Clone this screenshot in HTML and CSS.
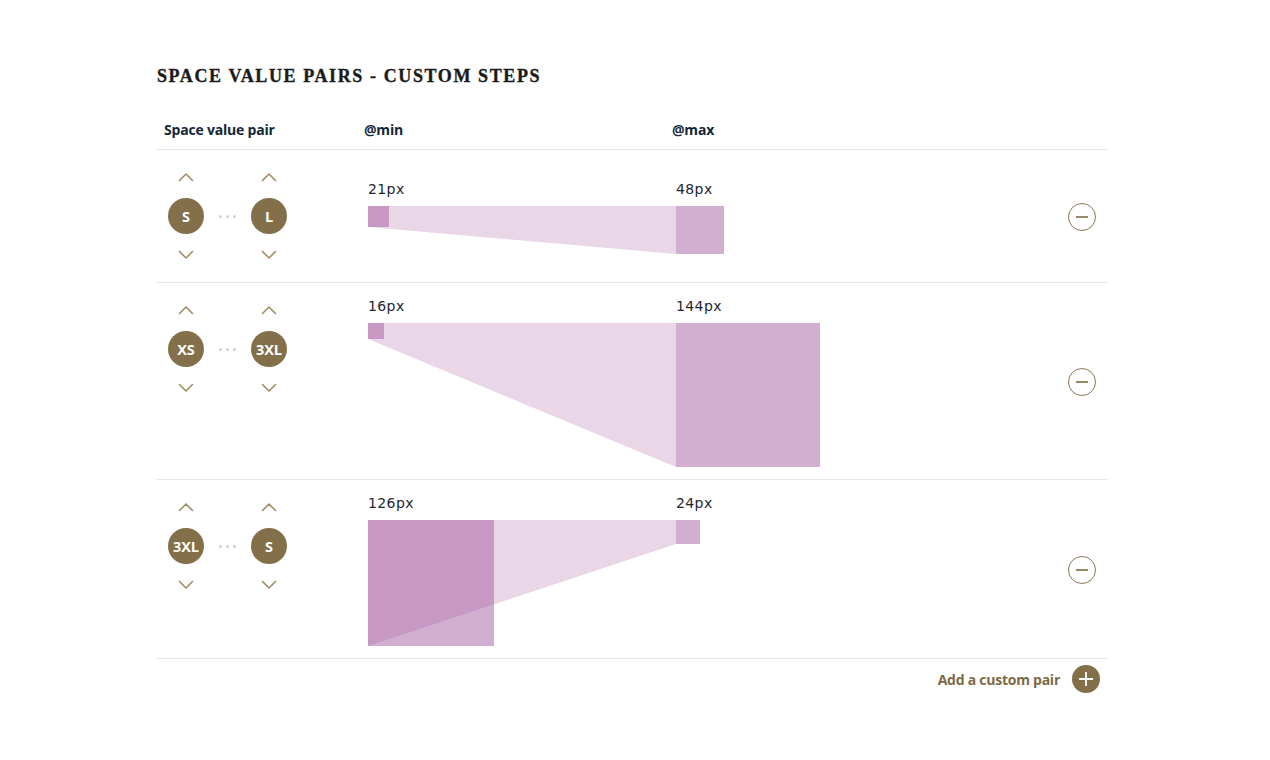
FILE: index.html
```html
<!DOCTYPE html>
<html>
<head>
<meta charset="utf-8">
<link rel="stylesheet" href="styles.css">
</head>
<body>
<div class="page">
  <h2 class="title">Space value pairs - custom steps</h2>
  <div class="table">
    <div class="head">
      <div class="h-pair">Space value pair</div>
      <div class="h-min">@min</div>
      <div class="h-max">@max</div>
    </div>

    <div class="row">
      <div class="pair">
        <div class="step">
          <button class="chev"><svg viewBox="0 0 16 10" width="16" height="10"><path d="M1.5 8.5 L8 2 L14.5 8.5"/></svg></button>
          <span class="badge">S</span>
          <button class="chev"><svg viewBox="0 0 16 10" width="16" height="10"><path d="M1.5 1.5 L8 8 L14.5 1.5"/></svg></button>
        </div>
        <span class="dots"><i></i><i></i><i></i></span>
        <div class="step">
          <button class="chev"><svg viewBox="0 0 16 10" width="16" height="10"><path d="M1.5 8.5 L8 2 L14.5 8.5"/></svg></button>
          <span class="badge">L</span>
          <button class="chev"><svg viewBox="0 0 16 10" width="16" height="10"><path d="M1.5 1.5 L8 8 L14.5 1.5"/></svg></button>
        </div>
      </div>
      <div class="viz">
        <div class="labels"><span class="lmin">21px</span><span>48px</span></div>
        <svg class="shape" width="356" height="48" viewBox="0 0 356 48">
          <polygon class="band" points="0,0 308,0 308,48 0,21"/>
          <rect class="sq" x="0" y="0" width="21" height="21"/>
          <rect class="sq" x="308" y="0" width="48" height="48"/>
        </svg>
      </div>
      <button class="remove"><svg viewBox="0 0 28 28" width="28" height="28"><circle cx="14" cy="14" r="13.5"/><path d="M8 14 H20"/></svg></button>
    </div>

    <div class="row">
      <div class="pair">
        <div class="step">
          <button class="chev"><svg viewBox="0 0 16 10" width="16" height="10"><path d="M1.5 8.5 L8 2 L14.5 8.5"/></svg></button>
          <span class="badge">XS</span>
          <button class="chev"><svg viewBox="0 0 16 10" width="16" height="10"><path d="M1.5 1.5 L8 8 L14.5 1.5"/></svg></button>
        </div>
        <span class="dots"><i></i><i></i><i></i></span>
        <div class="step">
          <button class="chev"><svg viewBox="0 0 16 10" width="16" height="10"><path d="M1.5 8.5 L8 2 L14.5 8.5"/></svg></button>
          <span class="badge">3XL</span>
          <button class="chev"><svg viewBox="0 0 16 10" width="16" height="10"><path d="M1.5 1.5 L8 8 L14.5 1.5"/></svg></button>
        </div>
      </div>
      <div class="viz">
        <div class="labels"><span class="lmin">16px</span><span>144px</span></div>
        <svg class="shape" width="452" height="144" viewBox="0 0 452 144">
          <polygon class="band" points="0,0 308,0 308,144 0,16"/>
          <rect class="sq" x="0" y="0" width="16" height="16"/>
          <rect class="sq" x="308" y="0" width="144" height="144"/>
        </svg>
      </div>
      <button class="remove"><svg viewBox="0 0 28 28" width="28" height="28"><circle cx="14" cy="14" r="13.5"/><path d="M8 14 H20"/></svg></button>
    </div>

    <div class="row">
      <div class="pair">
        <div class="step">
          <button class="chev"><svg viewBox="0 0 16 10" width="16" height="10"><path d="M1.5 8.5 L8 2 L14.5 8.5"/></svg></button>
          <span class="badge">3XL</span>
          <button class="chev"><svg viewBox="0 0 16 10" width="16" height="10"><path d="M1.5 1.5 L8 8 L14.5 1.5"/></svg></button>
        </div>
        <span class="dots"><i></i><i></i><i></i></span>
        <div class="step">
          <button class="chev"><svg viewBox="0 0 16 10" width="16" height="10"><path d="M1.5 8.5 L8 2 L14.5 8.5"/></svg></button>
          <span class="badge">S</span>
          <button class="chev"><svg viewBox="0 0 16 10" width="16" height="10"><path d="M1.5 1.5 L8 8 L14.5 1.5"/></svg></button>
        </div>
      </div>
      <div class="viz">
        <div class="labels"><span class="lmin">126px</span><span>24px</span></div>
        <svg class="shape" width="332" height="126" viewBox="0 0 332 126">
          <polygon class="band" points="0,0 308,0 308,24 0,126"/>
          <rect class="sq" x="0" y="0" width="126" height="126"/>
          <rect class="sq" x="308" y="0" width="24" height="24"/>
        </svg>
      </div>
      <button class="remove"><svg viewBox="0 0 28 28" width="28" height="28"><circle cx="14" cy="14" r="13.5"/><path d="M8 14 H20"/></svg></button>
    </div>
  </div>
  <div class="add">
    <span class="add-label">Add a custom pair</span>
    <button class="add-btn"><svg viewBox="0 0 28 28" width="28" height="28"><circle cx="14" cy="14" r="14"/><path d="M14 7 V21 M7 14 H21"/></svg></button>
  </div>
</div>
</body>
</html>
```
FILE: styles.css
```css
* { box-sizing: border-box; }
html, body { margin: 0; padding: 0; background: #ffffff; }
body { font-family: "Open Sans", "Liberation Sans", sans-serif; color: #13263a; }
button { border: 0; background: none; padding: 0; margin: 0; cursor: pointer; font: inherit; }

.page { width: 952px; margin-left: 156px; padding-top: 65px; }

.title {
  margin: 0 0 0 1px;
  font-family: "Liberation Serif", "Times New Roman", serif;
  font-weight: 700;
  font-size: 18px;
  line-height: 22px;
  letter-spacing: 1.6px;
  text-transform: uppercase;
  color: #1b1b1b;
  -webkit-text-stroke: 0.35px #1b1b1b;
}

.table { margin-top: 23px; }

.head {
  display: grid;
  grid-template-columns: 208px 308px 1fr;
  height: 40px;
  align-items: center;
  border-bottom: 1px solid #e6e6e6;
  font-family: "Open Sans", "Liberation Sans", sans-serif;
  font-weight: 700;
  font-size: 14px;
  letter-spacing: -0.2px;
  color: #14263a;
}
.h-pair { padding-left: 8px; }

.row {
  display: grid;
  grid-template-columns: 212px 1fr auto;
  padding: 14px 0 12px;
  border-bottom: 1px solid #e6e6e6;
}

.pair {
  display: flex;
  align-items: center;
  align-self: start;
  padding-left: 12px;
  margin: -1px 0 1px;
}
.step {
  display: flex;
  flex-direction: column;
  align-items: center;
  gap: 7px;
  width: 36px;
}
.chev {
  width: 28px; height: 28px;
  display: flex; align-items: center; justify-content: center;
}
.chev svg path { fill: none; stroke: #a08c62; stroke-width: 1.6; stroke-linecap: round; stroke-linejoin: round; }
.badge {
  width: 36px; height: 36px;
  border-radius: 50%;
  background: #836f4a;
  color: #ffffff;
  display: flex; align-items: center; justify-content: center;
  font-family: "Open Sans", "Liberation Sans", sans-serif;
  font-weight: 700;
  font-size: 14.5px;
  letter-spacing: -0.1px;
}
.dots {
  width: 47px;
  display: flex; justify-content: center; gap: 4px;
}
.dots i { width: 3px; height: 3px; border-radius: 50%; background: #cfcfcf; display: block; }

.viz { align-self: center; }
.labels {
  display: flex;
  height: 18px;
  margin-bottom: 8px;
  font-family: Verdana, "DejaVu Sans", sans-serif;
  font-size: 14px;
  line-height: 18px;
  letter-spacing: 0.4px;
  color: #1d2633;
}
.labels .lmin { width: 308px; }
.shape { display: block; }
.band { fill: rgba(155, 75, 150, 0.22); }
.sq { fill: rgba(155, 75, 150, 0.45); }

.remove {
  align-self: center;
  width: 28px; height: 28px;
  margin-right: 12px;
}
.remove svg { display: block; }
.remove circle { fill: none; stroke: #8a7854; stroke-width: 1; }
.remove path { stroke: #7d6a46; stroke-width: 1.6; }

.add {
  display: flex;
  justify-content: flex-end;
  align-items: center;
  gap: 12px;
  padding: 6px 8px 0 0;
}
.add-label {
  font-family: "Open Sans", "Liberation Sans", sans-serif;
  font-weight: 700;
  font-size: 14px;
  letter-spacing: -0.25px;
  color: #7d6a46;
}
.add-btn { width: 28px; height: 28px; }
.add-btn svg { display: block; }
.add-btn circle { fill: #836f4a; }
.add-btn path { stroke: #ffffff; stroke-width: 1.8; }
```
